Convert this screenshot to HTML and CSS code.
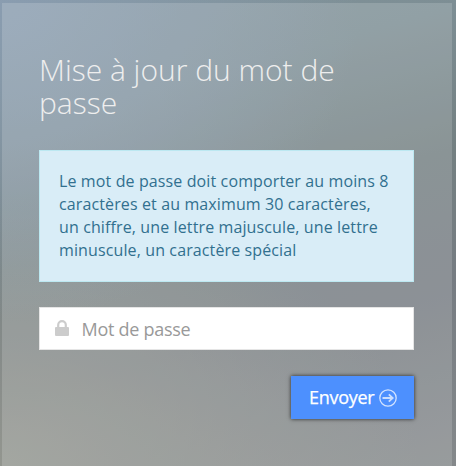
FILE: index.html
```
<!DOCTYPE html>
<html lang="fr">
<head>
<meta charset="utf-8">
<title>Mise à jour du mot de passe</title>
<link rel="stylesheet" href="styles.css">
</head>
<body>
<main class="panel">
  <h1 class="title">Mise à jour du mot de passe</h1>
  <div class="alert">Le mot de passe doit comporter au moins 8 caractères et au maximum 30 caractères, un chiffre, une lettre majuscule, une lettre minuscule, un caractère spécial</div>
  <form class="form">
    <label class="field">
      <svg class="lock" viewBox="0 0 14 16" width="14" height="16" aria-hidden="true">
        <path d="M3.200 8V4.900a3.800 3.800 0 0 1 7.600 0V8" fill="none" stroke="#ccc" stroke-width="2.200"/>
        <rect x="0" y="7" width="14" height="9" rx="1" fill="#ccc"/>
      </svg>
      <input class="input" type="password" placeholder="Mot de passe">
    </label>
    <button class="submit" type="button">
      <span class="label">Envoyer</span>
      <svg viewBox="0 0 18 18" width="18" height="18" fill="none" stroke="#fff" aria-hidden="true">
        <circle cx="9" cy="9" r="8.200" stroke-width="1.300" opacity=".75"/>
        <path d="M3.500 9h10M9.800 5.300 13.700 9l-3.900 3.700" stroke-width="1.800" opacity=".7"/>
      </svg>
    </button>
  </form>
</main>
</body>
</html>
```
FILE: styles.css
```
* { box-sizing: border-box; }

body {
  margin: 0;
  height: 466px;
  padding: 3px 4px 0 2px;
  overflow: hidden;
  font-family: "Open Sans", sans-serif;
  background:
    radial-gradient(ellipse 360px 320px at 0 0, rgba(138, 157, 177, .95), rgba(138, 157, 177, .5) 45%, rgba(138, 157, 177, 0)),
    radial-gradient(ellipse 420px 270px at 0 100%, rgba(149, 152, 144, .9), rgba(149, 152, 144, .45) 50%, rgba(149, 152, 144, 0)),
    linear-gradient(165deg, #81949c 0%, #7d8e94 22%, #748082 46%, #767c82 68%, #85898b 100%);
}

.panel {
  height: 463px;
  padding: 50px 38px 0 37px;
  background: rgba(255, 255, 255, .16);
}

.title {
  margin: 0 0 31px;
  font-size: 30px;
  font-weight: 300;
  line-height: 33px;
  color: #eee;
}

.alert {
  height: 132px;
  padding: 19px 22px 19px 19px;
  border: 1px solid #bce8f1;
  background: #d9edf7;
  color: #31708f;
  font-size: 16px;
  line-height: 22.857px;
  letter-spacing: .12px;
}

.form {
  display: flex;
  flex-direction: column;
  align-items: flex-end;
  gap: 26px;
  margin-top: 25px;
}

.field {
  display: flex;
  align-items: center;
  width: 100%;
  height: 43px;
  padding: 0 14px;
  border: 1px solid #e5e5e5;
  background: #fff;
}

.lock { flex: none; margin: 0 0 2px .5px; }

.input {
  flex: 1;
  min-width: 0;
  margin-left: 13px;
  padding: 0;
  border: 0;
  outline: 0;
  background: transparent;
  font: 18px/24px "Open Sans", sans-serif;
  letter-spacing: -.27px;
}

.input::placeholder { color: #999; opacity: 1; }

.submit {
  display: flex;
  align-items: center;
  justify-content: flex-start;
  gap: 5px;
  width: 123px;
  height: 43px;
  padding: 0 0 0 18px;
  border: 0;
  background: #4d90fe;
  box-shadow: 0 0 4px rgba(0, 0, 0, .75);
  color: #fff;
  font: 18px/24px "Open Sans", sans-serif;
  letter-spacing: -.3px;
  -webkit-text-stroke: .25px #fff;
}

.label { margin-bottom: 2px; }
```
